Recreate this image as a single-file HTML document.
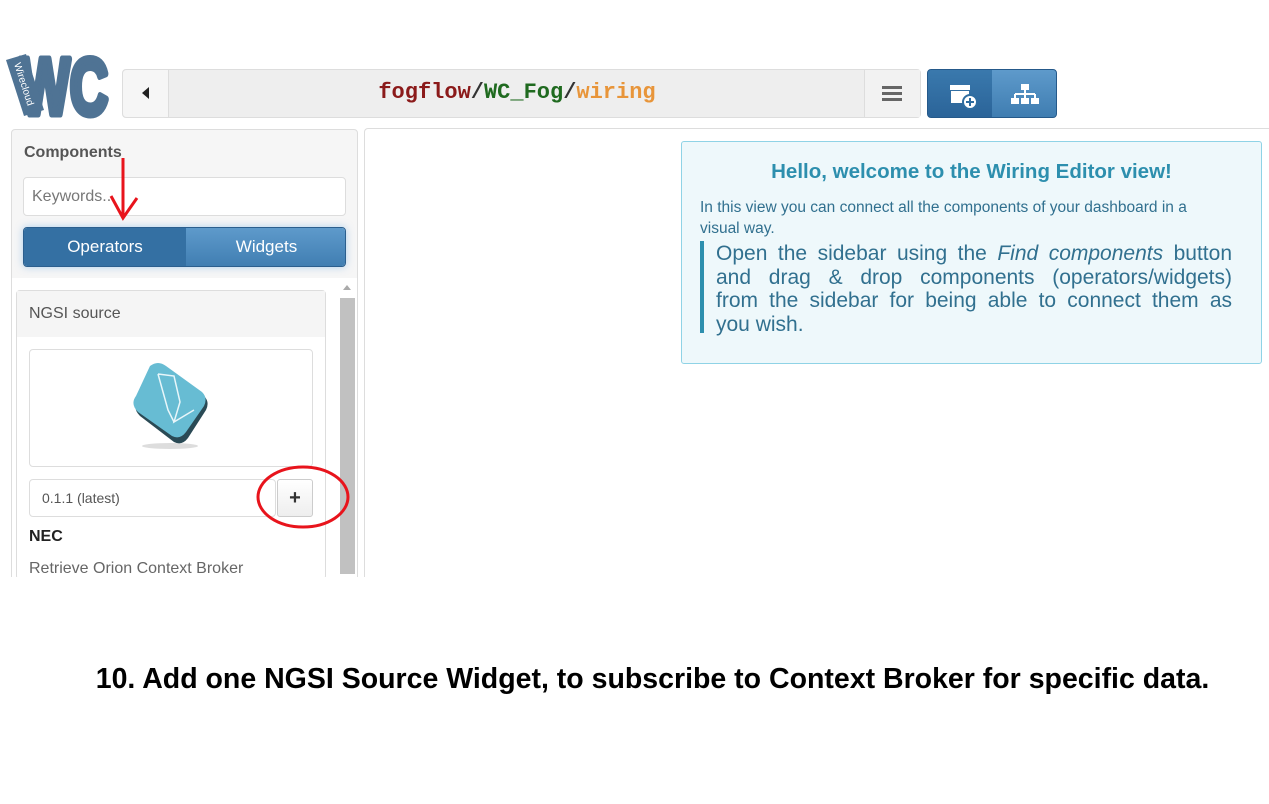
<!DOCTYPE html>
<html><head><meta charset="utf-8"><style>
*{box-sizing:border-box;margin:0;padding:0}
body{width:1269px;height:804px;background:#fff;font-family:"Liberation Sans",sans-serif;position:relative;overflow:hidden}
.abs{position:absolute}
.j{text-align:justify;text-align-last:justify;display:block}
</style></head><body>
<!-- logo -->
<svg class="abs" style="left:4px;top:50px" width="110" height="72" viewBox="0 0 110 72">
<text x="16" y="64" font-size="80" font-weight="bold" fill="#4f7394" stroke="#4f7394" stroke-width="7" stroke-linejoin="round" textLength="88" lengthAdjust="spacingAndGlyphs" font-family="Liberation Sans">WC</text>
<path d="M2 10 L22 4 L40 60 L20 66 Z" fill="#4f7394"/>
<text x="10" y="14" transform="rotate(72 10 14)" font-size="10" fill="#fff">Wirecloud</text>
</svg>
<!-- path bar -->
<div class="abs" style="left:122px;top:69px;width:799px;height:49px;background:#eee;border:1px solid #ddd;border-radius:4px"></div>
<div class="abs" style="left:123px;top:70px;width:46px;height:47px;background:#f6f6f6;border-right:1px solid #ddd;border-radius:4px 0 0 4px"></div>
<div class="abs" style="left:142px;top:87px;width:0;height:0;border-top:6px solid transparent;border-bottom:6px solid transparent;border-right:7px solid #222"></div>
<div class="abs" style="left:864px;top:70px;width:56px;height:47px;background:#f2f2f2;border-left:1px solid #ddd"></div>
<div class="abs" style="left:882px;top:86px;width:20px;height:3px;background:#666;box-shadow:0 6px 0 #666,0 12px 0 #666"></div>
<div class="abs" style="left:170px;top:80px;width:694px;text-align:center;font-family:'Liberation Mono',monospace;font-weight:bold;font-size:22px"><span style="color:#8b1a1a">fogflow</span><span style="color:#333">/</span><span style="color:#1f6a1f">WC_Fog</span><span style="color:#333">/</span><span style="color:#e8953a">wiring</span></div>
<!-- right buttons -->
<div class="abs" style="left:927px;top:69px;width:130px;height:49px;border-radius:4px;background:#2f6da0;border:1px solid #25598a;overflow:hidden">
<div style="position:absolute;left:64px;top:0;width:66px;height:49px;background:linear-gradient(#5e9acb,#3e7cb0)"></div>
<div style="position:absolute;left:0;top:0;width:64px;height:49px;background:linear-gradient(#3a79ad,#2a6398)"></div>
<svg style="position:absolute;left:20px;top:13px" width="32" height="28"><rect x="2" y="2" width="20" height="5" fill="#fff"/><rect x="3" y="8" width="18" height="12" fill="#fff"/><circle cx="22" cy="19" r="7" fill="#fff" stroke="#2f6da0" stroke-width="2"/><path d="M22 15v8M18 19h8" stroke="#2f6da0" stroke-width="2"/></svg>
<svg style="position:absolute;left:82px;top:12px" width="30" height="26"><rect x="11" y="2" width="8" height="6" fill="#fff"/><path d="M15 8v4M5 12h20M5 12v4M15 12v4M25 12v4" stroke="#fff" stroke-width="2"/><rect x="1" y="16" width="8" height="6" fill="#fff"/><rect x="11" y="16" width="8" height="6" fill="#fff"/><rect x="21" y="16" width="8" height="6" fill="#fff"/></svg>
</div>
<!-- sidebar -->
<div class="abs" style="left:11px;top:129px;width:347px;height:460px;background:#f6f6f6;border:1px solid #ddd;border-radius:4px"></div>
<div class="abs" style="left:24px;top:144px;font-size:16px;font-weight:bold;color:#555">Components</div>
<div class="abs" style="left:23px;top:177px;width:323px;height:39px;background:#fff;border:1px solid #ddd;border-radius:4px;padding:10px 8px;font-size:16px;color:#777">Keywords...</div>
<div class="abs" style="left:23px;top:227px;width:323px;height:40px;border-radius:4px;overflow:hidden;border:1px solid #2b5f8e;box-shadow:0 0 8px rgba(100,170,230,.5)">
<div style="position:absolute;left:0;top:0;width:162px;height:40px;background:#3470a3;color:#fff;font-size:17px;text-align:center;line-height:38px">Operators</div>
<div style="position:absolute;left:162px;top:0;width:161px;height:40px;background:linear-gradient(#5e9acb,#3f7db1);color:#fff;font-size:17px;text-align:center;line-height:38px">Widgets</div>
</div>
<div class="abs" style="left:12px;top:278px;width:345px;height:300px;background:#fff"></div>
<div class="abs" style="left:340px;top:298px;width:15px;height:276px;background:#c1c1c1"></div>
<div class="abs" style="left:343px;top:285px;border-left:4px solid transparent;border-right:4px solid transparent;border-bottom:5px solid #aaa"></div>
<div class="abs" style="left:16px;top:290px;width:310px;height:290px;border:1px solid #ddd;border-radius:4px;background:#fff"></div>
<div class="abs" style="left:17px;top:291px;width:308px;height:46px;background:#f5f5f5;font-size:16px;color:#555;padding:14px 12px">NGSI source</div>
<div class="abs" style="left:29px;top:349px;width:284px;height:118px;border:1px solid #ddd;border-radius:4px"></div>
<svg class="abs" style="left:130px;top:362px" width="82" height="90" viewBox="0 0 82 90">
<ellipse cx="40" cy="84" rx="28" ry="3" fill="#ddd"/>
<path d="M22 6 Q30 0 38 6 L74 34 Q80 40 76 48 L58 76 Q52 84 44 80 L10 54 Q2 46 8 38 Z" fill="#2a4a55"/>
<path d="M20 4 Q28 -2 36 4 L72 30 Q78 36 74 44 L56 70 Q50 78 42 74 L8 50 Q0 42 6 34 Z" fill="#67bcd3"/>
<path d="M28 12 L44 14 L50 40 L44 60 L64 48 M28 12 L38 48 L44 60" stroke="#e8f6fa" stroke-width="1.5" fill="none"/>
</svg>
<div class="abs" style="left:29px;top:479px;width:247px;height:38px;border:1px solid #ddd;border-radius:4px;padding:10px 12px;font-size:14px;color:#555">0.1.1 (latest)</div>
<div class="abs" style="left:277px;top:479px;width:36px;height:38px;border:1px solid #ccc;border-radius:3px;background:linear-gradient(#fff,#eee);font-size:20px;font-weight:bold;text-align:center;line-height:36px;color:#333">+</div>
<div class="abs" style="left:29px;top:528px;font-size:16px;font-weight:bold;color:#222">NEC</div>
<div class="abs" style="left:29px;top:560px;font-size:16px;color:#666">Retrieve Orion Context Broker</div>
<div class="abs" style="left:0;top:577px;width:1269px;height:227px;background:#fff"></div>
<!-- red annotations -->
<svg class="abs" style="left:0;top:0" width="1269" height="804" fill="none">
<path d="M123 158 L123 216 M111 196 L123 218 L137 198" stroke="#e8141c" stroke-width="3"/>
<ellipse cx="303" cy="497" rx="45" ry="30" stroke="#e8141c" stroke-width="3"/>
</svg>
<!-- main area -->
<div class="abs" style="left:364px;top:128px;width:905px;height:449px;border-left:1px solid #ddd;border-top:1px solid #ddd;border-radius:4px 0 0 0"></div>
<div class="abs" style="left:681px;top:141px;width:581px;height:223px;background:#eef8fb;border:1px solid #8fd3e6;border-radius:3px"></div>
<div class="abs" style="left:681px;top:160px;width:581px;text-align:center;font-size:20.5px;font-weight:bold;color:#2d8fae">Hello, welcome to the Wiring Editor view!</div>
<div class="abs" style="left:700px;top:197px;width:552px;font-size:15.5px;line-height:21px;color:#31708f">In this view you can connect all the components of your dashboard in a<br>visual way.</div>
<div class="abs" style="left:700px;top:241px;width:4px;height:92px;background:#2d8fae"></div>
<div class="abs" style="left:716px;top:242px;width:516px;font-size:21px;line-height:23.5px;color:#31708f">
<span class="j">Open the sidebar using the <i>Find components</i> button</span>
<span class="j">and drag &amp; drop components (operators/widgets)</span>
<span class="j">from the sidebar for being able to connect them as</span>
<span style="display:block">you wish.</span>
</div>
<div class="abs" style="left:0;top:663px;width:1305px;text-align:center;font-size:28.5px;font-weight:bold;color:#000">10. Add one NGSI Source Widget, to subscribe to Context Broker for specific data.</div>
</body></html>
